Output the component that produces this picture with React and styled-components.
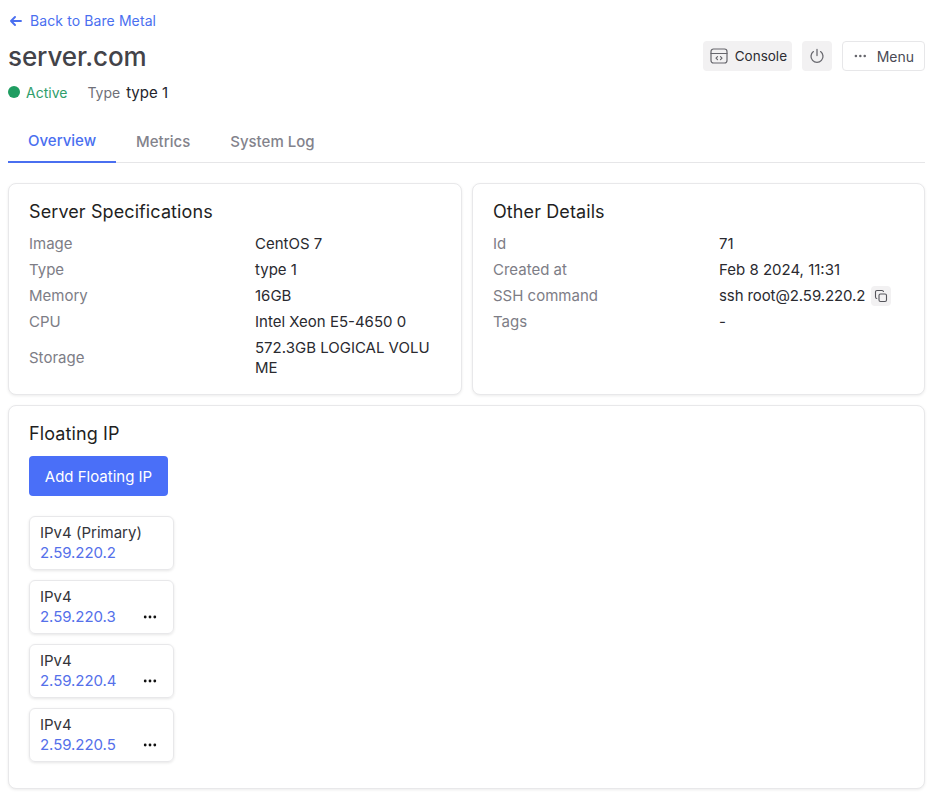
import React from "react";
import styled, { createGlobalStyle } from "styled-components";

const Global = createGlobalStyle`
  html, body { margin: 0; padding: 0; background: #fff; }
  body { font-family: Inter, "Liberation Sans", sans-serif; color: #1f1f23; }
`;
const Page = styled.div`
  width: 917px;
  padding: 12px 10px 8px 8px;
  box-sizing: content-box;
  display: flex;
  flex-direction: column;
`;
const BackLink = styled.a`
  display: flex;
  align-items: center;
  gap: 8px;
  height: 18px;
  padding-left: 2px;
  font-size: 14px;
  letter-spacing: 0.1px;
  line-height: 18px;
  color: #4a6ff0;
`;
const HeaderRow = styled.div`
  display: flex;
  justify-content: space-between;
  align-items: flex-start;
  margin-top: 9px;
`;
const Title = styled.h1`
  margin: 0;
  font-size: 26px;
  letter-spacing: -0.1px;
  line-height: 36px;
  font-weight: 500;
  color: #434349;
`;
const Actions = styled.div`
  display: flex;
  align-items: center;
  gap: 10px;
  margin-top: 2px;
`;
const GreyButton = styled.button`
  display: flex;
  align-items: center;
  justify-content: center;
  gap: 7px;
  height: 30px;
  padding: ${(p) => (p.$square ? "0" : "0 5px 0 7px")};
  width: ${(p) => (p.$square ? "30px" : "auto")};
  border: 0;
  border-radius: 4px;
  background: #f2f1f2;
  font: 13.5px Inter, sans-serif;
  color: #2c2c32;
`;
const MenuButton = styled.button`
  display: flex;
  align-items: center;
  gap: 9px;
  height: 30px;
  width: 83px;
  box-sizing: border-box;
  padding: 0 10px;
  border: 1px solid #e7e7e9;
  border-radius: 4px;
  background: #fff;
  font: 14px Inter, sans-serif;
  color: #4a4a55;
`;
const StatusRow = styled.div`
  display: flex;
  align-items: center;
  height: 20px;
  margin-top: 7px;
  font-size: 14px;
`;
const Dot = styled.span`
  width: 12px;
  height: 12px;
  border-radius: 50%;
  background: #1f9d61;
  margin-right: 6px;
`;
const ActiveText = styled.span`
  color: #2f9e6b;
  margin-right: 20px;
`;
const TypeLabel = styled.span`
  color: #6f6f78;
  margin-right: 6px;
`;
const TypeValue = styled.span`
  color: #24242c;
  font-size: 15px;
`;
const Tabs = styled.div`
  display: flex;
  margin-top: 19px;
  height: 42px;
  border-bottom: 1px solid #e6e6e8;
  box-sizing: border-box;
`;
const Tab = styled.div`
  height: 42px;
  box-sizing: border-box;
  padding: 8px 20px 0;
  font-size: 15px;
  font-weight: 500;
  line-height: ${(p) => (p.$active ? "24px" : "26px")};
  color: ${(p) => (p.$active ? "#4a6ff0" : "#83838c")};
  border-bottom: ${(p) => (p.$active ? "2px solid #4a6ff0" : "none")};
`;
const CardGrid = styled.div`
  display: grid;
  grid-template-columns: 454px 453px;
  gap: 10px;
  margin-top: 20px;
`;
const Card = styled.section`
  border: 1px solid #e8e8ea;
  border-radius: 8px;
  box-shadow: 0 1px 3px rgba(0, 0, 0, 0.08);
  padding: 16px 20px;
  box-sizing: border-box;
  background: #fff;
  height: ${(p) => p.$h}px;
`;
const Full = styled(Card)`
  margin-top: 10px;
`;
const CardTitle = styled.h2`
  margin: 0 0 ${(p) => p.$gap}px;
  font-size: 18px;
  letter-spacing: 0.1px;
  line-height: 24px;
  font-weight: 400;
  color: #1f1f23;
`;
const Row = styled.div`
  display: grid;
  grid-template-columns: 226px 186px;
  align-items: center;
  min-height: 26px;
  padding: 3px 0;
  box-sizing: border-box;
  font-size: 15px;
  line-height: 20px;
`;
const Label = styled.div`
  color: #7d7d86;
`;
const Value = styled.div`
  color: #2a2a30;
  word-break: break-all;
`;
const SshValue = styled.div`
  color: #2a2a30;
  display: flex;
  align-items: center;
  gap: 6px;
  letter-spacing: -0.1px;
  white-space: nowrap;
`;
const CopyButton = styled.span`
  display: flex;
  align-items: center;
  justify-content: center;
  width: 20px;
  height: 20px;
  border-radius: 4px;
  background: #f2f1f2;
`;
const AddButton = styled.button`
  display: block;
  width: 139px;
  height: 40px;
  border: 0;
  border-radius: 4px;
  background: #4a6ff8;
  color: #fff;
  font: 15px Inter, sans-serif;
`;
const IpList = styled.div`
  display: flex;
  flex-direction: column;
  gap: 10px;
  margin-top: 20px;
`;
const IpCard = styled.div`
  width: 145px;
  height: 54px;
  box-sizing: border-box;
  padding: 6px 10px;
  border: 1px solid #e8e8ea;
  border-radius: 6px;
  box-shadow: 0 1px 3px rgba(0, 0, 0, 0.1);
  font-size: 15px;
  line-height: 20px;
`;
const IpType = styled.div`
  color: #34343a;
`;
const IpLine = styled.div`
  display: flex;
  justify-content: space-between;
  align-items: center;
  padding-right: 5px;
`;
const IpAddr = styled.span`
  color: #5570ea;
  letter-spacing: -0.05px;
`;

const Dots = ({ color = "#111", size = 16 }) => (
  <svg width={size} height={size} viewBox="0 0 16 16" fill={color}>
    <circle cx="3.2" cy="8" r="1.4" />
    <circle cx="8" cy="8" r="1.4" />
    <circle cx="12.8" cy="8" r="1.4" />
  </svg>
);

const ips = [
  ["IPv4 (Primary)", "2.59.220.2", false],
  ["IPv4", "2.59.220.3", true],
  ["IPv4", "2.59.220.4", true],
  ["IPv4", "2.59.220.5", true],
];

export default function App() {
  return (
    <Page>
      <Global />
      <BackLink>
        <svg width="12" height="12" viewBox="0 0 12 12" fill="none" stroke="#4a6ff0" strokeWidth="1.9" strokeLinecap="round" strokeLinejoin="round">
          <path d="M11 6H1M5 2 1 6l4 4" />
        </svg>
        Back to Bare Metal
      </BackLink>
      <HeaderRow>
        <Title>server.com</Title>
        <Actions>
          <GreyButton>
            <svg width="18" height="18" viewBox="0 0 18 18" fill="none" stroke="#66666c" strokeWidth="1.2" strokeLinecap="round" strokeLinejoin="round">
              <rect x="1" y="2" width="16" height="14" rx="2.5" />
              <path d="M1 6.5h16M7.5 9.7 6 11.2l1.5 1.5M10.5 9.7l1.5 1.5-1.5 1.5" />
            </svg>
            Console
          </GreyButton>
          <GreyButton $square>
            <svg width="16" height="16" viewBox="0 0 16 16" fill="none" stroke="#6a6a70" strokeWidth="1.3" strokeLinecap="round">
              <path d="M8 1.5v6M4.4 3.6a6 6 0 1 0 7.2 0" />
            </svg>
          </GreyButton>
          <MenuButton>
            <Dots color="#66666c" size={16} />
            Menu
          </MenuButton>
        </Actions>
      </HeaderRow>
      <StatusRow>
        <Dot />
        <ActiveText>Active</ActiveText>
        <TypeLabel>Type</TypeLabel>
        <TypeValue>type 1</TypeValue>
      </StatusRow>
      <Tabs>
        <Tab $active>Overview</Tab>
        <Tab>Metrics</Tab>
        <Tab>System Log</Tab>
      </Tabs>
      <CardGrid>
        <Card $h={212}>
          <CardTitle $gap={7}>Server Specifications</CardTitle>
          <Row><Label>Image</Label><Value>CentOS 7</Value></Row>
          <Row><Label>Type</Label><Value>type 1</Value></Row>
          <Row><Label>Memory</Label><Value>16GB</Value></Row>
          <Row><Label>CPU</Label><Value>Intel Xeon E5-4650 0</Value></Row>
          <Row><Label>Storage</Label><Value>572.3GB LOGICAL VOLUME</Value></Row>
        </Card>
        <Card $h={212}>
          <CardTitle $gap={7}>Other Details</CardTitle>
          <Row><Label>Id</Label><Value>71</Value></Row>
          <Row><Label>Created at</Label><Value>Feb 8 2024, 11:31</Value></Row>
          <Row>
            <Label>SSH command</Label>
            <SshValue>
              ssh root@2.59.220.2
              <CopyButton>
                <svg width="14" height="14" viewBox="0 0 14 14" fill="none" stroke="#55555b" strokeWidth="1.1" strokeLinejoin="round">
                  <rect x="5" y="5" width="7.5" height="7.5" rx="1.5" />
                  <path d="M9.5 3V2.8A1.5 1.5 0 0 0 8 1.5H3A1.5 1.5 0 0 0 1.5 3v5A1.5 1.5 0 0 0 3 9.5h.2" />
                </svg>
              </CopyButton>
            </SshValue>
          </Row>
          <Row><Label>Tags</Label><Value>-</Value></Row>
        </Card>
      </CardGrid>
      <Full $h={384}>
        <CardTitle $gap={10}>Floating IP</CardTitle>
        <AddButton>Add Floating IP</AddButton>
        <IpList>
          {ips.map(([t, a, menu]) => (
            <IpCard key={a}>
              <IpType>{t}</IpType>
              <IpLine>
                <IpAddr>{a}</IpAddr>
                {menu && <Dots />}
              </IpLine>
            </IpCard>
          ))}
        </IpList>
      </Full>
    </Page>
  );
}
